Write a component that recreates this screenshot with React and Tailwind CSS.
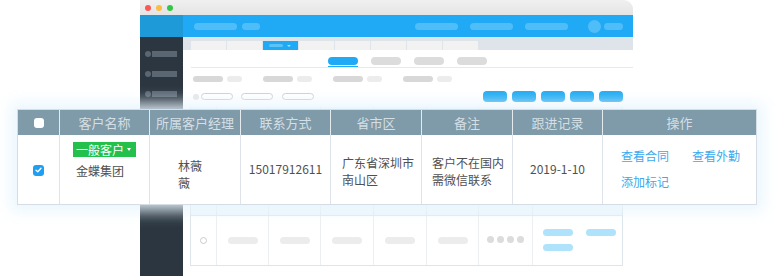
const cols = [
  { w: "w-[42px]" },
  { w: "w-[90px]", title: "客户名称" },
  { w: "w-[91px]", title: "所属客户经理" },
  { w: "w-[90px]", title: "联系方式" },
  { w: "w-[91px]", title: "省市区" },
  { w: "w-[91px]", title: "备注" },
  { w: "w-[90px]", title: "跟进记录" },
  { w: "flex-1", title: "操作" },
];

const backCols = ["w-[26px]", "w-[52px]", "w-[52px]", "w-[53px]", "w-[53px]", "w-[52px]", "w-[54px]", "flex-1"];

function Pill({ className }) {
  return <div className={"rounded-full " + className} />;
}

function BrowserMock() {
  return (
    <div className="ml-[140px] w-[493px] h-[276px] flex flex-col overflow-hidden rounded-tr-[9px] bg-white">
      {/* title bar */}
      <div className="h-[15px] shrink-0 flex items-center gap-[5px] pl-[5px] bg-gradient-to-b from-[#f0f0f0] to-[#e4e4e4]">
        <div className="w-[6px] h-[6px] rounded-full bg-[#fc5753]" />
        <div className="w-[6px] h-[6px] rounded-full bg-[#fdbc40]" />
        <div className="w-[6px] h-[6px] rounded-full bg-[#33c748]" />
      </div>
      {/* top header */}
      <div className="h-[22px] shrink-0 flex">
        <div className="w-[43px] bg-[#1e9ad9]" />
        <div className="flex-1 bg-[#20aaf5] flex items-center pl-[11px] pr-[10px]">
          <Pill className="w-[43px] h-[7px] bg-[#4fbdf8]" />
          <Pill className="ml-[5px] w-[18px] h-[7px] bg-[#4fbdf8]" />
          <Pill className="ml-auto w-[43px] h-[7px] bg-[#4fbdf8]" />
          <Pill className="ml-[12px] w-[43px] h-[7px] bg-[#4fbdf8]" />
          <Pill className="ml-[12px] w-[43px] h-[7px] bg-[#4fbdf8]" />
          <Pill className="ml-[20px] w-[13px] h-[13px] bg-[#4fbdf8]" />
          <Pill className="ml-[3px] w-[19px] h-[7px] bg-[#4fbdf8]" />
        </div>
      </div>
      <div className="flex flex-1">
        {/* sidebar */}
        <div className="w-[43px] bg-[#2b3640] flex flex-col gap-[14px] pt-[14px] pl-[5px]">
          {[0, 1, 2].map((i) => (
            <div key={i} className="flex items-center gap-[1px]">
              <div className="w-[6px] h-[6px] rounded-full bg-[#5b6673]" />
              <div className="w-[25px] h-[6px] bg-[#5b6673]" />
            </div>
          ))}
        </div>
        {/* content */}
        <div className="flex-1 flex flex-col">
          <div className="h-[13px] bg-[#dfe3ea] flex items-end gap-[1px] pl-[8px]">
            {[0, 1, 2, 3, 4, 5, 6, 7].map((i) =>
              i === 2 ? (
                <div key={i} className="w-[35px] h-[9px] bg-[#20aaf5] flex items-center pl-[6px] gap-[4px]">
                  <div className="w-[14px] h-[3px] rounded-full bg-[#5cc3f8]" />
                  <div className="w-0 h-0 border-x-[2px] border-x-transparent border-t-[2px] border-t-[#a5dcfb]" />
                </div>
              ) : (
                <div key={i} className="w-[35px] h-[9px] bg-[#f2f2f2]" />
              )
            )}
          </div>
          {/* sub tabs */}
          <div className="ml-[8px] h-[18px] border-b border-[#e6e9ee] flex items-end pl-[137px] gap-[13px]">
            <div className="flex flex-col items-center">
              <Pill className="w-[30px] h-[8px] bg-[#20aaf5]" />
              <div className="mt-[1px] w-[30px] h-[1px] bg-[#20aaf5]" />
            </div>
            <Pill className="mb-[2px] w-[30px] h-[8px] bg-[#dcdcdc]" />
            <Pill className="mb-[2px] w-[30px] h-[8px] bg-[#dcdcdc]" />
            <Pill className="mb-[2px] w-[30px] h-[8px] bg-[#dcdcdc]" />
          </div>
          {/* filters */}
          <div className="mt-[8px] ml-[10px] flex items-center">
            {[0, 1, 2, 3].map((i) => (
              <div key={i} className="flex items-center gap-[4px] mr-[21px]">
                <Pill className="w-[30px] h-[6px] bg-[#d8d8d8]" />
                <Pill className="w-[15px] h-[6px] bg-[#ececec]" />
              </div>
            ))}
          </div>
          {/* actions row */}
          <div className="mt-[9px] ml-[10px] mr-[10px] flex items-center">
            <div className="w-[6px] h-[6px] rounded-full bg-[#e6e6e6]" />
            <div className="ml-[2px] w-[32px] h-[7px] rounded-full border border-[#cfcfcf]" />
            <div className="ml-[8px] w-[32px] h-[7px] rounded-full border border-[#cfcfcf]" />
            <div className="ml-[9px] w-[32px] h-[7px] rounded-full border border-[#cfcfcf]" />
            <div className="ml-auto flex gap-[5px]">
              {[0, 1, 2, 3, 4].map((i) => (
                <div key={i} className="w-[24px] h-[11px] rounded-[4px] bg-[#1faaf2]" />
              ))}
            </div>
          </div>
          {/* back table */}
          <div className="mt-[5px] ml-[7px] mr-[10px] border border-t-0 border-[#dde4ea] flex flex-col">
            <div className="h-[108px] bg-[#eef7fd] flex">
              {backCols.map((w, i) => (
                <div key={i} className={w + " border-r border-[#e3eaef] last:border-r-0"} />
              ))}
            </div>
            <div className="h-[50px] flex border-t border-[#e3eaef]">
              <div className={backCols[0] + " border-r border-[#eceff2] flex items-center justify-center"}>
                <div className="w-[7px] h-[7px] rounded-full border border-[#cccccc]" />
              </div>
              {[1, 2, 3, 4, 5].map((i) => (
                <div key={i} className={backCols[i] + " border-r border-[#eceff2] flex items-center justify-center"}>
                  <Pill className="w-[30px] h-[7px] bg-[#ececec]" />
                </div>
              ))}
              <div className={backCols[6] + " border-r border-[#eceff2] flex items-center justify-center gap-[3px] pb-[2px]"}>
                {[0, 1, 2, 3].map((j) => (
                  <div key={j} className="w-[7px] h-[7px] rounded-full bg-[#dcdcdc]" />
                ))}
              </div>
              <div className="flex-1 pl-[10px] pt-[13px] flex flex-wrap gap-x-[13px] gap-y-[8px] content-start">
                <Pill className="w-[30px] h-[7px] bg-[#aee3fb]" />
                <Pill className="w-[30px] h-[7px] bg-[#aee3fb]" />
                <Pill className="w-[30px] h-[7px] bg-[#aee3fb]" />
              </div>
            </div>
          </div>
        </div>
      </div>
    </div>
  );
}

function HighlightCard() {
  return (
    <div className="absolute left-[17px] top-[109px] w-[740px] h-[96px] bg-white border border-[#d6dee5] shadow-[0_0_14px_6px_rgba(232,245,253,0.92)] flex flex-col text-[12px]">
      <div className="h-[25px] bg-[#7f9aa8] flex text-[#d3dfe5] text-[13px]">
        {cols.map((c, i) => (
          <div
            key={i}
            className={c.w + " flex items-center justify-center border-r border-[#e4eaee] last:border-r-0"}
          >
            {i === 0 ? (
              <div className="w-[10px] h-[10px] rounded-[3px] bg-white" />
            ) : (
              c.title
            )}
          </div>
        ))}
      </div>
      <div className="flex-1 flex text-[#505050]">
        <div className="w-[42px] border-r border-[#dde3e8] flex items-center justify-center pt-[1px]">
          <div className="w-[11px] h-[11px] rounded-[3px] bg-[#1f9ff2] flex items-center justify-center">
            <svg width="7" height="6" viewBox="0 0 7 6" fill="none">
              <path d="M1 3.2 2.8 4.8 6 1.2" stroke="white" strokeWidth="1.3" strokeLinecap="round" strokeLinejoin="round" />
            </svg>
          </div>
        </div>
        <div className="w-[90px] border-r border-[#dde3e8] flex flex-col pl-[13px] pt-[7px]">
          <div className="w-[63px] h-[15px] bg-[#23c04c] text-white text-[12px] leading-[15px] flex items-center pl-[3px]">
            一般客户
            <span className="ml-[3px] w-0 h-0 border-x-[2.5px] border-x-transparent border-t-[3px] border-t-white" />
          </div>
          <div className="mt-[6px] pl-[3px] text-[12px] leading-[16px]">金蝶集团</div>
        </div>
        <div className="w-[91px] border-r border-[#dde3e8] flex items-center pl-[28px] pt-[8px]">
          <div className="leading-[17px]">
            林薇
            <br />
            薇
          </div>
        </div>
        <div className="w-[90px] border-r border-[#dde3e8] flex items-center justify-center pb-[2px]">
          15017912611
        </div>
        <div className="w-[91px] border-r border-[#dde3e8] flex items-center pl-[11px] pt-[3px]">
          <div className="leading-[17px]">
            广东省深圳市
            <br />
            南山区
          </div>
        </div>
        <div className="w-[91px] border-r border-[#dde3e8] flex items-center pl-[10px] pt-[3px]">
          <div className="leading-[17px]">
            客户不在国内
            <br />
            需微信联系
          </div>
        </div>
        <div className="w-[90px] border-r border-[#dde3e8] flex items-center justify-center pb-[1px]">
          2019-1-10
        </div>
        <div className="flex-1 pl-[18px] pt-[13px] text-[#3aa9ee] leading-[16px]">
          <div className="flex gap-[23px]">
            <span>查看合同</span>
            <span>查看外勤</span>
          </div>
          <div className="mt-[10px]">添加标记</div>
        </div>
      </div>
    </div>
  );
}

export default function App() {
  return (
    <div
      className="relative w-[775px] h-[276px] overflow-hidden bg-white"
      style={{ fontFamily: '"Noto Sans CJK SC", "Noto Sans", sans-serif' }}
    >
      <BrowserMock />
      <HighlightCard />
    </div>
  );
}
